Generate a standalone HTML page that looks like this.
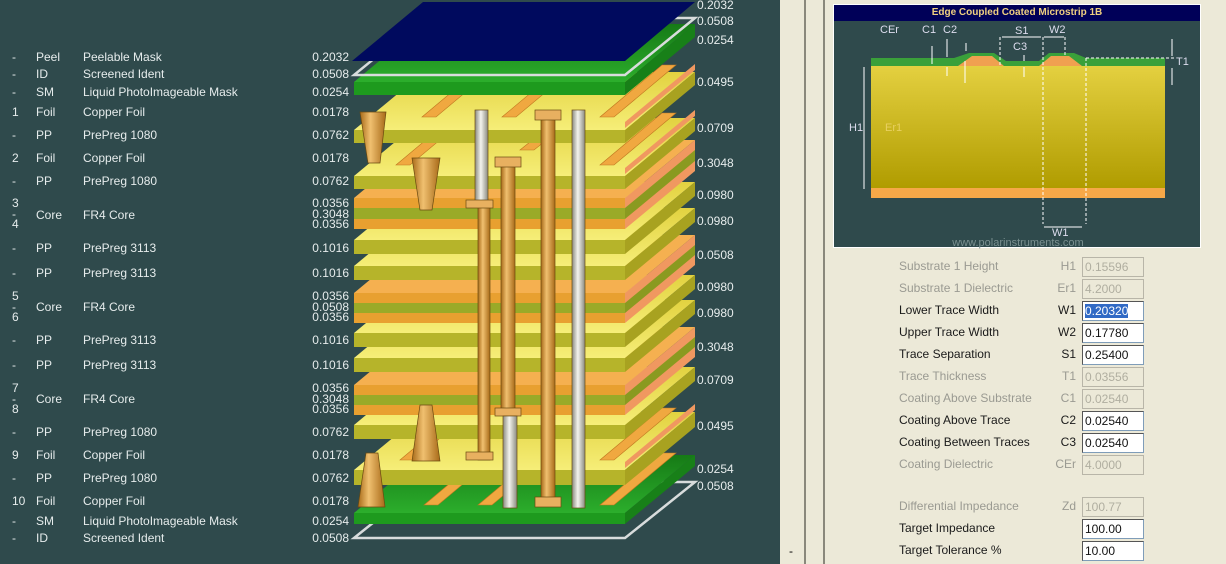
<!DOCTYPE html>
<html><head><meta charset="utf-8"><style>
*{margin:0;padding:0;box-sizing:border-box}
body{width:1226px;height:564px;overflow:hidden;background:#2f4a4c;font-family:"Liberation Sans",Arial,sans-serif;position:relative}
.t{position:absolute;color:#e6ecec;font-size:12px;line-height:14px;white-space:nowrap}
.v{position:absolute;color:#e6ecec;font-size:12px;line-height:14px;width:60px;text-align:right;left:289px}
.r{position:absolute;color:#e6ecec;font-size:12px;line-height:14px;left:697px}
.cv{line-height:10.5px}
#panel{position:absolute;left:780px;top:0;width:446px;height:564px;background:#ece9d8}
.fl{position:absolute;left:119px;font-size:12px;color:#1a1a1a;white-space:nowrap}
.fl.d{color:#9a9a92}
.fc{position:absolute;left:260px;width:36px;text-align:right;font-size:12px;color:#1a1a1a}
.fc.d{color:#9a9a92}
.in{position:absolute;left:302px;width:62px;height:20px;background:#fff;border:1px solid #7f9db9;border-top-color:#555;border-left-color:#555;font-size:12px;padding:2px 2px;color:#111}
.in.d{background:#ece9d8;color:#b0aea0;border-color:#b8b5a8}
</style></head><body>

<div class="t" style="left:12px;top:50px">-</div><div class="t" style="left:36px;top:50px">Peel</div><div class="t" style="left:83px;top:50px">Peelable Mask</div><div class="v" style="top:50px">0.2032</div>
<div class="t" style="left:12px;top:67px">-</div><div class="t" style="left:36px;top:67px">ID</div><div class="t" style="left:83px;top:67px">Screened Ident</div><div class="v" style="top:67px">0.0508</div>
<div class="t" style="left:12px;top:85px">-</div><div class="t" style="left:36px;top:85px">SM</div><div class="t" style="left:83px;top:85px">Liquid PhotoImageable Mask</div><div class="v" style="top:85px">0.0254</div>
<div class="t" style="left:12px;top:105px">1</div><div class="t" style="left:36px;top:105px">Foil</div><div class="t" style="left:83px;top:105px">Copper Foil</div><div class="v" style="top:105px">0.0178</div>
<div class="t" style="left:12px;top:128px">-</div><div class="t" style="left:36px;top:128px">PP</div><div class="t" style="left:83px;top:128px">PrePreg 1080</div><div class="v" style="top:128px">0.0762</div>
<div class="t" style="left:12px;top:151px">2</div><div class="t" style="left:36px;top:151px">Foil</div><div class="t" style="left:83px;top:151px">Copper Foil</div><div class="v" style="top:151px">0.0178</div>
<div class="t" style="left:12px;top:174px">-</div><div class="t" style="left:36px;top:174px">PP</div><div class="t" style="left:83px;top:174px">PrePreg 1080</div><div class="v" style="top:174px">0.0762</div>
<div class="t cv" style="left:12px;top:198px">3<br>-<br>4</div><div class="t" style="left:36px;top:208px">Core</div><div class="t" style="left:83px;top:208px">FR4 Core</div><div class="v cv" style="top:198px">0.0356<br>0.3048<br>0.0356</div>
<div class="t" style="left:12px;top:241px">-</div><div class="t" style="left:36px;top:241px">PP</div><div class="t" style="left:83px;top:241px">PrePreg 3113</div><div class="v" style="top:241px">0.1016</div>
<div class="t" style="left:12px;top:266px">-</div><div class="t" style="left:36px;top:266px">PP</div><div class="t" style="left:83px;top:266px">PrePreg 3113</div><div class="v" style="top:266px">0.1016</div>
<div class="t cv" style="left:12px;top:291px">5<br>-<br>6</div><div class="t" style="left:36px;top:300px">Core</div><div class="t" style="left:83px;top:300px">FR4 Core</div><div class="v cv" style="top:291px">0.0356<br>0.0508<br>0.0356</div>
<div class="t" style="left:12px;top:333px">-</div><div class="t" style="left:36px;top:333px">PP</div><div class="t" style="left:83px;top:333px">PrePreg 3113</div><div class="v" style="top:333px">0.1016</div>
<div class="t" style="left:12px;top:358px">-</div><div class="t" style="left:36px;top:358px">PP</div><div class="t" style="left:83px;top:358px">PrePreg 3113</div><div class="v" style="top:358px">0.1016</div>
<div class="t cv" style="left:12px;top:383px">7<br>-<br>8</div><div class="t" style="left:36px;top:392px">Core</div><div class="t" style="left:83px;top:392px">FR4 Core</div><div class="v cv" style="top:383px">0.0356<br>0.3048<br>0.0356</div>
<div class="t" style="left:12px;top:425px">-</div><div class="t" style="left:36px;top:425px">PP</div><div class="t" style="left:83px;top:425px">PrePreg 1080</div><div class="v" style="top:425px">0.0762</div>
<div class="t" style="left:12px;top:448px">9</div><div class="t" style="left:36px;top:448px">Foil</div><div class="t" style="left:83px;top:448px">Copper Foil</div><div class="v" style="top:448px">0.0178</div>
<div class="t" style="left:12px;top:471px">-</div><div class="t" style="left:36px;top:471px">PP</div><div class="t" style="left:83px;top:471px">PrePreg 1080</div><div class="v" style="top:471px">0.0762</div>
<div class="t" style="left:12px;top:494px">10</div><div class="t" style="left:36px;top:494px">Foil</div><div class="t" style="left:83px;top:494px">Copper Foil</div><div class="v" style="top:494px">0.0178</div>
<div class="t" style="left:12px;top:514px">-</div><div class="t" style="left:36px;top:514px">SM</div><div class="t" style="left:83px;top:514px">Liquid PhotoImageable Mask</div><div class="v" style="top:514px">0.0254</div>
<div class="t" style="left:12px;top:531px">-</div><div class="t" style="left:36px;top:531px">ID</div><div class="t" style="left:83px;top:531px">Screened Ident</div><div class="v" style="top:531px">0.0508</div>

<svg width="780" height="564" style="position:absolute;left:0;top:0">
<defs>
<linearGradient id="yt" x1="0" y1="1" x2="0" y2="0"><stop offset="0" stop-color="#f6ee78"/><stop offset="1" stop-color="#e2d240"/></linearGradient>
<linearGradient id="gt" x1="0" y1="1" x2="0" y2="0"><stop offset="0" stop-color="#2cae2c"/><stop offset="1" stop-color="#167a16"/></linearGradient>
<linearGradient id="cy" x1="0" x2="1"><stop offset="0" stop-color="#a86a18"/><stop offset=".4" stop-color="#f0c070"/><stop offset="1" stop-color="#a86a18"/></linearGradient>
<linearGradient id="sv" x1="0" x2="1"><stop offset="0" stop-color="#8a8a80"/><stop offset=".45" stop-color="#f4f4ee"/><stop offset="1" stop-color="#8a8a80"/></linearGradient>
</defs>
<polygon points="354,538 625,538 695,482 424,482" fill="none" stroke="#d8dcdc" stroke-width="2.5"/>
<polygon points="354,513 625,513 695,455 424,455" fill="url(#gt)"/>
<rect x="354" y="513" width="271" height="11" fill="#1e9a1e"/>
<polygon points="625,513 695,455 695,466 625,524" fill="#188018"/>
<g fill="#f0a840" stroke="#c07820" stroke-width=".6">
<polygon points="424,505 438,505 500,453 486,453"/><polygon points="478,505 492,505 554,453 540,453"/><polygon points="600,505 614,505 676,453 662,453"/>
</g>
<polygon points="354,470 625,470 695,412 424,412" fill="url(#yt)"/>
<rect x="354" y="470" width="271" height="15" fill="#b6b42a"/>
<polygon points="625,470 695,412 695,427 625,485" fill="#a8a220"/>
<g fill="#f0a840" stroke="#c07820" stroke-width=".6">
<polygon points="400,460 414,460 476,408 462,408"/><polygon points="600,460 614,460 676,408 662,408"/>
</g>
<polygon points="625,462 695,404 695,410 625,468" fill="#f09860"/>
<polygon points="354,425 625,425 695,367 424,367" fill="url(#yt)"/>
<rect x="354" y="425" width="271" height="14" fill="#b6b42a"/>
<polygon points="625,425 695,367 695,381 625,439" fill="#a8a220"/>
<polygon points="354,385 625,385 695,327 424,327" fill="#f5b050"/>
<rect x="354" y="385" width="271" height="10" fill="#e8a030"/><rect x="354" y="395" width="271" height="10" fill="#9aaa28"/><rect x="354" y="405" width="271" height="10" fill="#e8a030"/>
<polygon points="625,385 695,327 695,357 625,415" fill="#f09860"/><polygon points="625,395 695,337 695,347 625,405" fill="#8a9a20"/>
<polygon points="354,358 625,358 695,300 424,300" fill="url(#yt)"/>
<rect x="354" y="358" width="271" height="14" fill="#b6b42a"/>
<polygon points="625,358 695,300 695,314 625,372" fill="#a8a220"/>
<polygon points="354,333 625,333 695,275 424,275" fill="url(#yt)"/>
<rect x="354" y="333" width="271" height="14" fill="#b6b42a"/>
<polygon points="625,333 695,275 695,289 625,347" fill="#a8a220"/>
<polygon points="354,293 625,293 695,235 424,235" fill="#f5b050"/>
<rect x="354" y="293" width="271" height="10" fill="#e8a030"/><rect x="354" y="303" width="271" height="10" fill="#9aaa28"/><rect x="354" y="313" width="271" height="10" fill="#e8a030"/>
<polygon points="625,293 695,235 695,265 625,323" fill="#f09860"/><polygon points="625,303 695,245 695,255 625,313" fill="#8a9a20"/>
<polygon points="354,266 625,266 695,208 424,208" fill="url(#yt)"/>
<rect x="354" y="266" width="271" height="14" fill="#b6b42a"/>
<polygon points="625,266 695,208 695,222 625,280" fill="#a8a220"/>
<polygon points="354,240 625,240 695,182 424,182" fill="url(#yt)"/>
<rect x="354" y="240" width="271" height="14" fill="#b6b42a"/>
<polygon points="625,240 695,182 695,196 625,254" fill="#a8a220"/>
<polygon points="354,198 625,198 695,140 424,140" fill="#f5b050"/>
<rect x="354" y="198" width="271" height="10" fill="#e8a030"/><rect x="354" y="208" width="271" height="11" fill="#9aaa28"/><rect x="354" y="219" width="271" height="10" fill="#e8a030"/>
<polygon points="625,198 695,140 695,171 625,229" fill="#f09860"/><polygon points="625,208 695,150 695,161 625,219" fill="#8a9a20"/>
<polygon points="354,176 625,176 695,118 424,118" fill="url(#yt)"/>
<rect x="354" y="176" width="271" height="13" fill="#b6b42a"/>
<polygon points="625,176 695,118 695,131 625,189" fill="#a8a220"/>
<g fill="#f0a840" stroke="#c07820" stroke-width=".6">
<polygon points="396,165 410,165 472,113 458,113"/><polygon points="600,165 614,165 676,113 662,113"/><polygon points="520,150 534,150 584,110 570,110"/>
</g>
<polygon points="625,168 695,110 695,116 625,174" fill="#f09860"/>
<polygon points="354,130 625,130 695,72 424,72" fill="url(#yt)"/>
<rect x="354" y="130" width="271" height="13" fill="#b6b42a"/>
<polygon points="625,130 695,72 695,85 625,143" fill="#a8a220"/>
<g fill="#f0a840" stroke="#c07820" stroke-width=".6">
<polygon points="422,117 436,117 498,65 484,65"/><polygon points="502,117 516,117 578,65 564,65"/><polygon points="600,117 614,117 676,65 662,65"/>
</g>
<polygon points="625,122 695,64 695,70 625,128" fill="#f09860"/>
<polygon points="354,82 625,82 695,24 424,24" fill="url(#gt)"/>
<rect x="354" y="82" width="271" height="13" fill="#1e9a1e"/>
<polygon points="625,82 695,24 695,37 625,95" fill="#188018"/>
<polygon points="354,75 625,75 695,18 424,18" fill="none" stroke="#d8dcdc" stroke-width="2.5"/>
<polygon points="352,61 625,61 695,2 423,2" fill="#000a5e"/>
<g stroke="#6a4a10" stroke-width=".7">
<rect x="475" y="110" width="13" height="92" fill="url(#sv)"/>
<rect x="478" y="202" width="12" height="258" fill="url(#cy)"/>
<rect x="466" y="200" width="27" height="8" fill="#e8b060"/>
<rect x="466" y="452" width="27" height="8" fill="#e8b060"/>
<rect x="501" y="165" width="14" height="250" fill="url(#cy)"/>
<rect x="495" y="157" width="26" height="10" fill="#e8b060"/>
<rect x="495" y="408" width="26" height="8" fill="#e8b060"/>
<rect x="503" y="416" width="14" height="92" fill="url(#sv)"/>
<rect x="541" y="118" width="14" height="382" fill="url(#cy)"/>
<rect x="535" y="110" width="26" height="10" fill="#e8b060"/>
<rect x="535" y="497" width="26" height="10" fill="#e8b060"/>
<rect x="572" y="110" width="13" height="398" fill="url(#sv)"/>
<polygon points="360,112 386,112 380,163 368,163" fill="url(#cy)"/>
<polygon points="412,158 440,158 432,210 420,210" fill="url(#cy)"/>
<polygon points="420,405 432,405 440,461 412,461" fill="url(#cy)"/>
<polygon points="366,453 378,453 385,507 358,507" fill="url(#cy)"/>
</g>
</svg>

<div class="r" style="top:-2px">0.2032</div>
<div class="r" style="top:14px">0.0508</div>
<div class="r" style="top:33px">0.0254</div>
<div class="r" style="top:75px">0.0495</div>
<div class="r" style="top:121px">0.0709</div>
<div class="r" style="top:156px">0.3048</div>
<div class="r" style="top:188px">0.0980</div>
<div class="r" style="top:214px">0.0980</div>
<div class="r" style="top:248px">0.0508</div>
<div class="r" style="top:280px">0.0980</div>
<div class="r" style="top:306px">0.0980</div>
<div class="r" style="top:340px">0.3048</div>
<div class="r" style="top:373px">0.0709</div>
<div class="r" style="top:419px">0.0495</div>
<div class="r" style="top:462px">0.0254</div>
<div class="r" style="top:479px">0.0508</div>

<div id="panel">
<div style="position:absolute;left:24px;top:0;width:2px;height:564px;background:#8a887c"></div>
<div style="position:absolute;left:43px;top:0;width:2px;height:564px;background:#8a887c"></div>
<div style="position:absolute;left:9px;top:544px;font-size:12px">-</div>
<div style="position:absolute;left:53px;top:4px;width:368px;height:244px;background:#2f4a4c;border:1px solid #fff">
 <div style="height:16px;background:#000058;color:#f0d080;font-weight:bold;font-size:10px;text-align:center;line-height:16px">Edge Coupled Coated Microstrip 1B</div>
 <svg width="368" height="228" style="position:absolute;left:0;top:16px" font-family="Liberation Sans" font-size="11" fill="#dde">
  <defs><linearGradient id="sb" x1="0" y1="0" x2="0" y2="1"><stop offset="0" stop-color="#e4d040"/><stop offset="1" stop-color="#b09c00"/></linearGradient></defs>
  <rect x="37" y="45" width="294" height="122" fill="url(#sb)"/>
  <rect x="37" y="167" width="294" height="10" fill="#f6a848"/>
  <path d="M37,37 L120,37 L135,32 L160,32 L172,40 L205,40 L215,32 L240,32 L252,37 L331,37 L331,45 L37,45Z" fill="#3aa03a"/>
  <polygon points="124,45 138,35 158,35 170,45" fill="#f0a050"/>
  <polygon points="205,45 217,35 235,35 248,45" fill="#f0a050"/>
  <g stroke="#fff" stroke-width="1" stroke-dasharray="3,2" fill="none">
   <line x1="166" y1="16" x2="166" y2="45"/><line x1="209" y1="16" x2="209" y2="203"/><line x1="231" y1="16" x2="231" y2="35"/><line x1="252" y1="37" x2="252" y2="203"/><line x1="252" y1="37" x2="340" y2="37"/>
  </g>
  <g stroke="#fff" stroke-width="1">
   <line x1="30" y1="46" x2="30" y2="168"/><line x1="210" y1="206" x2="248" y2="206"/>
   <line x1="168" y1="16" x2="207" y2="16"/><line x1="210" y1="16" x2="230" y2="16"/>
   <line x1="113" y1="18" x2="113" y2="36"/><line x1="113" y1="46" x2="113" y2="55"/>
   <line x1="132" y1="22" x2="132" y2="30"/><line x1="131" y1="40" x2="131" y2="62"/>
   <line x1="98" y1="25" x2="98" y2="43"/><line x1="190" y1="34" x2="190" y2="40"/><line x1="190" y1="46" x2="190" y2="56"/>
   <line x1="338" y1="18" x2="338" y2="35"/><line x1="338" y1="47" x2="338" y2="64"/>
  </g>
  <text x="46" y="12">CEr</text><text x="88" y="12">C1</text><text x="109" y="12">C2</text><text x="181" y="13">S1</text><text x="179" y="29">C3</text>
  <text x="215" y="12">W2</text><text x="342" y="44">T1</text><text x="15" y="110">H1</text><text x="51" y="110" fill="#e8d060">Er1</text>
  <text x="218" y="215">W1</text>
  <text x="184" y="225" text-anchor="middle" font-size="11" fill="#7a9090">www.polarinstruments.com</text>
 </svg>
</div>

<div class="fl d" style="top:259px">Substrate 1 Height</div><div class="fc d" style="top:259px">H1</div><div class="in d" style="top:257px">0.15596</div>
<div class="fl d" style="top:281px">Substrate 1 Dielectric</div><div class="fc d" style="top:281px">Er1</div><div class="in d" style="top:279px">4.2000</div>
<div class="fl" style="top:303px">Lower Trace Width</div><div class="fc" style="top:303px">W1</div><div class="in" style="top:301px"><span style="background:#316ac5;color:#fff">0.20320</span></div>
<div class="fl" style="top:325px">Upper Trace Width</div><div class="fc" style="top:325px">W2</div><div class="in" style="top:323px">0.17780</div>
<div class="fl" style="top:347px">Trace Separation</div><div class="fc" style="top:347px">S1</div><div class="in" style="top:345px">0.25400</div>
<div class="fl d" style="top:369px">Trace Thickness</div><div class="fc d" style="top:369px">T1</div><div class="in d" style="top:367px">0.03556</div>
<div class="fl d" style="top:391px">Coating Above Substrate</div><div class="fc d" style="top:391px">C1</div><div class="in d" style="top:389px">0.02540</div>
<div class="fl" style="top:413px">Coating Above Trace</div><div class="fc" style="top:413px">C2</div><div class="in" style="top:411px">0.02540</div>
<div class="fl" style="top:435px">Coating Between Traces</div><div class="fc" style="top:435px">C3</div><div class="in" style="top:433px">0.02540</div>
<div class="fl d" style="top:457px">Coating Dielectric</div><div class="fc d" style="top:457px">CEr</div><div class="in d" style="top:455px">4.0000</div>
<div class="fl d" style="top:499px">Differential Impedance</div><div class="fc d" style="top:499px">Zd</div><div class="in d" style="top:497px">100.77</div>
<div class="fl" style="top:521px">Target Impedance</div><div class="in" style="top:519px">100.00</div>
<div class="fl" style="top:543px">Target Tolerance %</div><div class="in" style="top:541px">10.00</div>
</div>
</body></html>
